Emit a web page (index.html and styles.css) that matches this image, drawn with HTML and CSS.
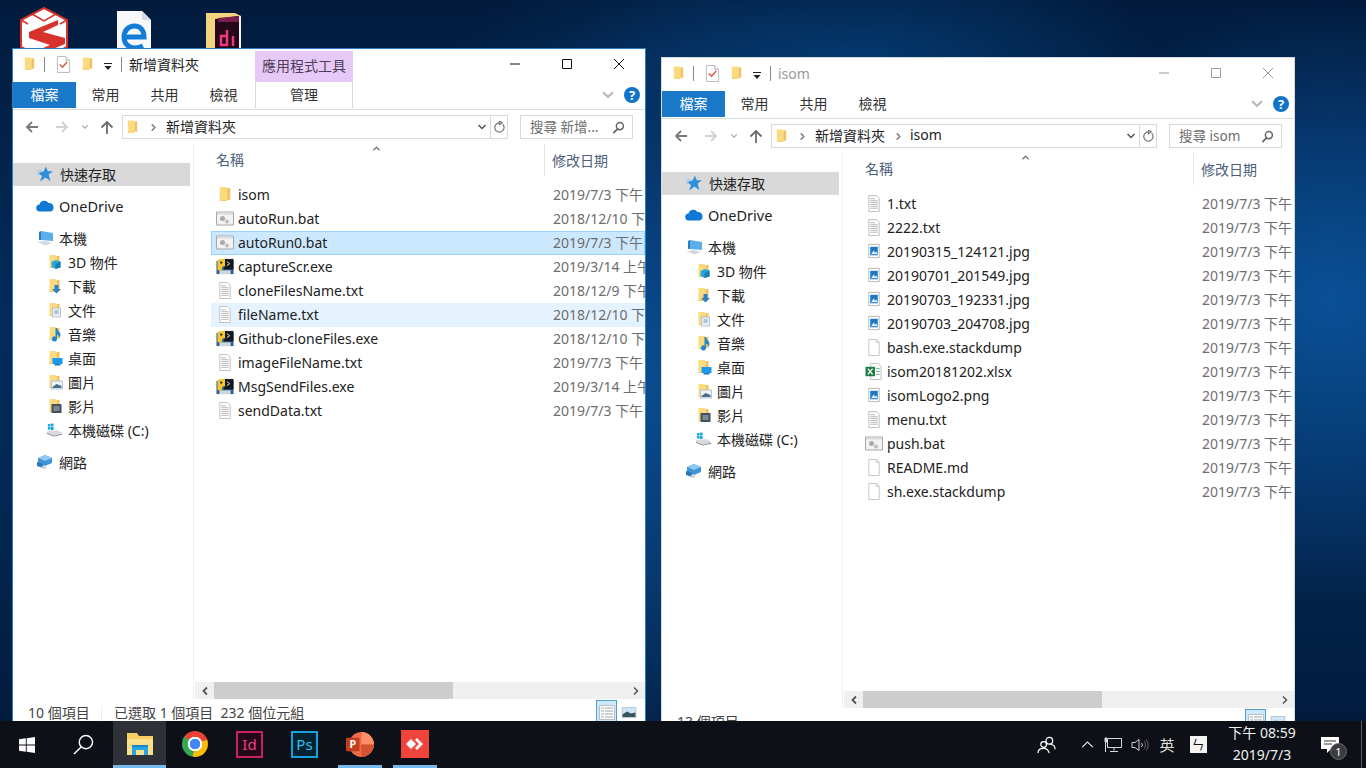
FILE: index.html
```html
<!DOCTYPE html>
<html lang="zh-Hant">
<head>
<meta charset="utf-8">
<title>檔案總管</title>
<link rel="stylesheet" href="styles.css">
</head>
<body>
<svg class="sprite" aria-hidden="true">
  <symbol id="i-folder" viewBox="0 0 16 16"><path d="M3 1h6l1 1v12H3z" fill="#fbdb7e"/><path d="M10 2h3v11h-3z" fill="#eec35f"/><path d="M3 13h7v1H3z" fill="#f3cc68"/></symbol>
  <symbol id="i-check" viewBox="0 0 16 18"><path d="M1.500 .5h9l4 4v13h-13z" fill="#fff" stroke="#b9b9b9"/><path d="M10.500 .5v4h4" fill="#eee" stroke="#b9b9b9"/><path d="M4 9l3 3 5-6" fill="none" stroke="#d9573f" stroke-width="1.500"/></symbol>
  <symbol id="i-txt" viewBox="0 0 16 18"><path d="M2.500 .5h8l3 3v14h-11z" fill="#fff" stroke="#bdbdbd"/><path d="M4 4h5M4 6h8M4 8h8M4 10h8M4 12h8M4 14h8" stroke="#b9b9b9"/></symbol>
  <symbol id="i-blank" viewBox="0 0 16 18"><path d="M2.500 .5h8l3 3v14h-11z" fill="#fff" stroke="#c4c4c4"/><path d="M10.500 .5v3h3" fill="#f1f1f1" stroke="#c4c4c4"/></symbol>
  <symbol id="i-img" viewBox="0 0 16 18"><path d="M2.500 1.500h11v14h-11z" fill="#fff" stroke="#b5b5b5"/><rect x="4" y="4" width="8" height="9" fill="#1e78c8"/><path d="M5 12l2.500-4 2 2 1-1 1.500 3z" fill="#d5ecff"/></symbol>
  <symbol id="i-bat" viewBox="0 0 18 16"><path d="M.5 1.500h17v13H.5z" fill="#f2f2f2" stroke="#a8a8a8"/><path d="M1 2h16v2H1z" fill="#d8dde3"/><circle cx="6.500" cy="8" r="2.500" fill="#aaa"/><circle cx="11" cy="11" r="2" fill="#bdbdbd"/></symbol>
  <symbol id="i-exe" viewBox="0 0 18 18"><path d="M0 3h18v14H0z" fill="#2a5d8c"/><path d="M3 13h12v4H3z" fill="#cfd6dc"/><path d="M8 1h10v11H8z" fill="#15181f"/><path d="M1 3l2-2h6v8H6v4H1z" fill="#f1c832"/><circle cx="5" cy="5" r="1.200" fill="#222"/><path d="M11 4l3 2-3 2" stroke="#ddd" fill="none"/></symbol>
  <symbol id="i-xlsx" viewBox="0 0 18 18"><path d="M5.500 .5h8l3 3v14h-11z" fill="#fff" stroke="#bfbfbf"/><path d="M11 6h4M11 9h4M11 12h4" stroke="#5fa97f"/><rect x="0" y="4" width="10" height="10" fill="#1d7d45"/><path d="M2.500 6l5 6M7.500 6l-5 6" stroke="#fff" stroke-width="1.400"/></symbol>
  <symbol id="i-star" viewBox="0 0 16 16"><path d="M9 .5l1.700 4.800H16l-4.300 3.200 1.600 6.500L8.600 11.500 3 15.500l2-5.500L1 7l5.500-1.500z" fill="#2f8fdb"/><path d="M0 5h5M0 8h3" stroke="#8ec6ee"/></symbol>
  <symbol id="i-cloud" viewBox="0 0 18 12"><path d="M4 11.500a3.500 3.500 0 0 1-.5-7A5 5 0 0 1 12.500 3a4.200 4.200 0 0 1 5 4.500 4 4 0 0 1-3 4z" fill="#0f78d4"/></symbol>
  <symbol id="i-pc" viewBox="0 0 18 16"><path d="M5 1l12 2v8l-12-1z" fill="#5aaeea"/><path d="M5 1l-2 1v8l2 0z" fill="#2f7fbd"/><path d="M1 12l8-1 7 2-7 2.500z" fill="#d5d9dd"/></symbol>
  <symbol id="i-3d" viewBox="0 0 16 16"><use href="#i-folder"/><path d="M9 6l5 1.500v6L9 15l-4-2V8z" fill="#28a7d8"/><path d="M9 10v5l5-1.500V7.500z" fill="#1a7fb0"/></symbol>
  <symbol id="i-dl" viewBox="0 0 16 16"><use href="#i-folder"/><path d="M8 7h4v4h2.500L10 15.500 5.500 11H8z" fill="#2f7fc4"/></symbol>
  <symbol id="i-doc" viewBox="0 0 16 16"><use href="#i-folder"/><path d="M6 6h8v9H6z" fill="#e8eef4" stroke="#a9b7c4" stroke-width=".8"/><path d="M8 9h4M8 11h4" stroke="#6a9cc5"/></symbol>
  <symbol id="i-music" viewBox="0 0 16 16"><use href="#i-folder"/><path d="M9 2h1.500c.5 3 3.500 4 3.500 7 0 1-.5 2-1 3 0-2-1-3-2.500-3.500V13a2.500 2.500 0 1 1-1.500-2.300z" fill="#1d87cf"/></symbol>
  <symbol id="i-desk" viewBox="0 0 16 16"><use href="#i-folder"/><rect x="6" y="8" width="10" height="6" fill="#1a9ae8"/><rect x="8" y="14" width="6" height="1.500" fill="#1a7dc0"/></symbol>
  <symbol id="i-pic" viewBox="0 0 16 16"><use href="#i-folder"/><rect x="5" y="7" width="11" height="8" fill="#eef3f7" stroke="#a9b7c4" stroke-width=".8"/><path d="M6 13l4-3 5 2v2H6z" fill="#47708f"/></symbol>
  <symbol id="i-vid" viewBox="0 0 16 16"><use href="#i-folder"/><rect x="5" y="6" width="10" height="9" fill="#45505c"/><path d="M7 8h6v5H7z" fill="#7a8794"/></symbol>
  <symbol id="i-drive" viewBox="0 0 18 16"><path d="M1 9l11-1 5 3v2l-9 2-7-3z" fill="#d9dcdf"/><path d="M1 12l7 3 9-2v-1l-9 2-7-3z" fill="#8c9298"/><path d="M2 2l2.500-.4v2.600H2zM5 1.500l3-.5v3.200H5zM2 4.800h2.500v2.600H2zM5 4.800h3V8H5z" fill="#17a3e0"/></symbol>
  <symbol id="i-net" viewBox="0 0 18 16"><path d="M9 1l7 3v5l-7 3-7-3V4z" fill="#3f93d6"/><path d="M9 1l7 3-7 3-7-3z" fill="#8ecbf2"/><path d="M1 8l6 2v4l-6-2z" fill="#2a76b5"/><path d="M5 12l6 1 -3 2.500z" fill="#c7ccd1"/></symbol>
  <symbol id="i-back" viewBox="0 0 16 16"><path d="M14 8H3M8 3L3 8l5 5" fill="none" stroke="currentColor" stroke-width="1.800"/></symbol>
  <symbol id="i-up" viewBox="0 0 16 16"><path d="M8 15V3M2.500 8.500L8 3l5.500 5.500" fill="none" stroke="currentColor" stroke-width="1.800"/></symbol>
  <symbol id="i-chev" viewBox="0 0 10 10"><path d="M1.500 3l3.500 3.500L8.500 3" fill="none" stroke="currentColor" stroke-width="1.500"/></symbol>
  <symbol id="i-right" viewBox="0 0 10 10"><path d="M3 1.500L6.500 5 3 8.500" fill="none" stroke="currentColor" stroke-width="1.500"/></symbol>
  <symbol id="i-left" viewBox="0 0 10 10"><path d="M7 1.500L3.500 5 7 8.500" fill="none" stroke="currentColor" stroke-width="1.800"/></symbol>
  <symbol id="i-refresh" viewBox="0 0 14 14"><path d="M10.500 3.500a5 5 0 1 1-3.500-1.500M7 0v4l3-2z" fill="none" stroke="currentColor" stroke-width="1.300"/></symbol>
  <symbol id="i-search" viewBox="0 0 14 14"><circle cx="8.500" cy="5.500" r="3.800" fill="none" stroke="currentColor" stroke-width="1.600"/><path d="M6 8.500L1.500 13" stroke="currentColor" stroke-width="2"/></symbol>
  <symbol id="i-min" viewBox="0 0 12 12"><path d="M1 6h10" stroke="currentColor"/></symbol>
  <symbol id="i-max" viewBox="0 0 12 12"><path d="M1.500 1.500h9v9h-9z" fill="none" stroke="currentColor"/></symbol>
  <symbol id="i-close" viewBox="0 0 12 12"><path d="M1 1l10 10M11 1L1 11" stroke="currentColor"/></symbol>
  <symbol id="i-qdrop" viewBox="0 0 10 10"><path d="M1 2.500h8" stroke="#222"/><path d="M1.500 5h7L5 9z" fill="#222"/></symbol>
  <symbol id="i-details" viewBox="0 0 18 18"><path d="M1.500 2.500h15v14h-15z" fill="#fff" stroke="#b8bec4"/><path d="M3 5h3M7 5h8M3 8h3M7 8h8M3 11h3M7 11h8M3 14h3M7 14h8" stroke="#9aa3ab"/></symbol>
  <symbol id="i-large" viewBox="0 0 16 12"><rect width="16" height="12" fill="#b5c9dc"/><rect x="1" y="1" width="14" height="10" fill="#cfe3f3"/><path d="M1 8l5-3 4 2 5-1v5H1z" fill="#39575a"/></symbol>
</svg>

<main class="desktop">
  <div class="desk-icon desk-sketch">
    <svg viewBox="0 0 48 54" width="48" height="54"><path d="M24 1L47 13v27L24 52 1 40V13z" fill="#fff" stroke="#d8322c" stroke-width="2"/><path d="M12 7l12 7 12-7M1 13l7 4M47 13l-7 4" fill="none" stroke="#d8322c" stroke-width="1.500"/><path d="M38 13L9 25v6l21 7-14 6h12l17-7v-6L23 25l15-7z" fill="#d8322c"/></svg>
  </div>
  <div class="desk-icon desk-edge">
    <svg viewBox="0 0 36 40" width="36" height="40"><path d="M1 1h25l9 9v30H1z" fill="#f6f8fa"/><path d="M26 1v9h9z" fill="#d5dbe2"/><path d="M9 27h19c0-7-4-11-9.500-11S8 20 8 27s5 11 11 11c3 0 6-1 8-2" fill="none" stroke="#127cd6" stroke-width="5"/></svg>
  </div>
  <div class="desk-icon desk-id">
    <svg viewBox="0 0 36 40" width="36" height="40"><path d="M0 1h29l6 3v36H0z" fill="#f5d27e"/><path d="M33 4h2v36h-2z" fill="#f4f4f4"/><path d="M9 7l24-3v36H9z" fill="#25071a"/><path d="M12 6l21-2v6H12z" fill="#7a1e4e"/><path d="M21 18v15h-6V24h6M27 24v10" fill="none" stroke="#f0377f" stroke-width="2.500"/></svg>
  </div>

  <section class="window active left-win">
    <header class="titlebar">
      <div class="qat">
        <svg class="qi"><use href="#i-folder"/></svg>
        <span class="qsep"></span>
        <svg class="qi2"><use href="#i-check"/></svg>
        <svg class="qi"><use href="#i-folder"/></svg>
        <svg class="qdrop"><use href="#i-qdrop"/></svg>
        <span class="qsep"></span>
        <span class="wintitle">新增資料夾</span>
      </div>
      <div class="ctx-title">應用程式工具</div>
      <div class="winbtns">
        <span class="winbtn"><svg><use href="#i-min"/></svg></span>
        <span class="winbtn"><svg><use href="#i-max"/></svg></span>
        <span class="winbtn"><svg><use href="#i-close"/></svg></span>
      </div>
    </header>
    <nav class="tabs">
      <span class="tab tab-file">檔案</span>
      <span class="tab">常用</span>
      <span class="tab">共用</span>
      <span class="tab">檢視</span>
      <span class="tab tab-ctx">管理</span>
      <svg class="ribbon-chev"><use href="#i-chev"/></svg>
      <span class="help">?</span>
    </nav>
    <div class="navrow">
      <span class="nb nb-back"><svg><use href="#i-back"/></svg></span>
      <span class="nb nb-fwd"><svg><use href="#i-back"/></svg></span>
      <span class="nb nb-drop"><svg><use href="#i-chev"/></svg></span>
      <span class="nb nb-up"><svg><use href="#i-up"/></svg></span>
      <div class="address">
        <svg class="addr-folder"><use href="#i-folder"/></svg>
        <svg class="crumb-sep"><use href="#i-right"/></svg>
        <span class="crumb">新增資料夾</span>
        <svg class="addr-drop"><use href="#i-chev"/></svg>
        <span class="addr-refresh"><svg><use href="#i-refresh"/></svg></span>
      </div>
      <div class="searchbox"><span class="search-text">搜尋 新增...</span><svg><use href="#i-search"/></svg></div>
    </div>
    <div class="body">
      <aside class="pane">
        <div class="pi pi-sel"><svg class="pic-star"><use href="#i-star"/></svg>快速存取</div>
        <div class="pi pi-top pi-od"><svg><use href="#i-cloud"/></svg>OneDrive</div>
        <div class="pi pi-top"><svg><use href="#i-pc"/></svg>本機</div>
        <div class="pi pi-child"><svg><use href="#i-3d"/></svg>3D 物件</div>
        <div class="pi pi-child"><svg><use href="#i-dl"/></svg>下載</div>
        <div class="pi pi-child"><svg><use href="#i-doc"/></svg>文件</div>
        <div class="pi pi-child"><svg><use href="#i-music"/></svg>音樂</div>
        <div class="pi pi-child"><svg><use href="#i-desk"/></svg>桌面</div>
        <div class="pi pi-child"><svg><use href="#i-pic"/></svg>圖片</div>
        <div class="pi pi-child"><svg><use href="#i-vid"/></svg>影片</div>
        <div class="pi pi-child"><svg><use href="#i-drive"/></svg>本機磁碟 (C:)</div>
        <div class="pi pi-top"><svg><use href="#i-net"/></svg>網路</div>
      </aside>
      <div class="files">
        <div class="colhead">
          <span class="col-name">名稱<svg class="sort"><use href="#i-chev"/></svg></span>
          <span class="col-date">修改日期</span>
        </div>
        <div class="rows">
          <div class="row"><span class="fn"><svg><use href="#i-folder"/></svg>isom</span><span class="fd">2019/7/3 下午 08:59</span></div>
          <div class="row"><span class="fn"><svg><use href="#i-bat"/></svg>autoRun.bat</span><span class="fd">2018/12/10 下午 03:21</span></div>
          <div class="row row-sel"><span class="fn"><svg><use href="#i-bat"/></svg>autoRun0.bat</span><span class="fd">2019/7/3 下午 08:41</span></div>
          <div class="row"><span class="fn"><svg><use href="#i-exe"/></svg>captureScr.exe</span><span class="fd">2019/3/14 上午 10:12</span></div>
          <div class="row"><span class="fn"><svg><use href="#i-txt"/></svg>cloneFilesName.txt</span><span class="fd">2018/12/9 下午 04:33</span></div>
          <div class="row row-hover"><span class="fn"><svg><use href="#i-txt"/></svg>fileName.txt</span><span class="fd">2018/12/10 下午 03:21</span></div>
          <div class="row"><span class="fn"><svg><use href="#i-exe"/></svg>Github-cloneFiles.exe</span><span class="fd">2018/12/10 下午 03:21</span></div>
          <div class="row"><span class="fn"><svg><use href="#i-txt"/></svg>imageFileName.txt</span><span class="fd">2019/7/3 下午 08:47</span></div>
          <div class="row"><span class="fn"><svg><use href="#i-exe"/></svg>MsgSendFiles.exe</span><span class="fd">2019/3/14 上午 10:12</span></div>
          <div class="row"><span class="fn"><svg><use href="#i-txt"/></svg>sendData.txt</span><span class="fd">2019/7/3 下午 08:47</span></div>
        </div>
        <div class="hscroll">
          <span class="sb-arrow"><svg><use href="#i-left"/></svg></span>
          <span class="sb-thumb"></span>
          <span class="sb-arrow sb-right"><svg><use href="#i-right"/></svg></span>
        </div>
      </div>
    </div>
    <footer class="status">
      <span class="st-count">10 個項目</span>
      <span class="st-sep"></span>
      <span class="st-sel">已選取 1 個項目&nbsp;&nbsp;232 個位元組</span>
      <span class="viewbtn viewbtn-on"><svg><use href="#i-details"/></svg></span>
      <svg class="view-large"><use href="#i-large"/></svg>
    </footer>
  </section>

  <section class="window inactive right-win">
    <header class="titlebar">
      <div class="qat">
        <svg class="qi"><use href="#i-folder"/></svg>
        <span class="qsep"></span>
        <svg class="qi2"><use href="#i-check"/></svg>
        <svg class="qi"><use href="#i-folder"/></svg>
        <svg class="qdrop"><use href="#i-qdrop"/></svg>
        <span class="qsep"></span>
        <span class="wintitle">isom</span>
      </div>
      <div class="winbtns">
        <span class="winbtn"><svg><use href="#i-min"/></svg></span>
        <span class="winbtn"><svg><use href="#i-max"/></svg></span>
        <span class="winbtn"><svg><use href="#i-close"/></svg></span>
      </div>
    </header>
    <nav class="tabs">
      <span class="tab tab-file">檔案</span>
      <span class="tab">常用</span>
      <span class="tab">共用</span>
      <span class="tab">檢視</span>
      <svg class="ribbon-chev"><use href="#i-chev"/></svg>
      <span class="help">?</span>
    </nav>
    <div class="navrow">
      <span class="nb nb-back"><svg><use href="#i-back"/></svg></span>
      <span class="nb nb-fwd"><svg><use href="#i-back"/></svg></span>
      <span class="nb nb-drop"><svg><use href="#i-chev"/></svg></span>
      <span class="nb nb-up"><svg><use href="#i-up"/></svg></span>
      <div class="address">
        <svg class="addr-folder"><use href="#i-folder"/></svg>
        <svg class="crumb-sep"><use href="#i-right"/></svg>
        <span class="crumb">新增資料夾</span>
        <svg class="crumb-sep crumb-sep2"><use href="#i-right"/></svg>
        <span class="crumb">isom</span>
        <svg class="addr-drop"><use href="#i-chev"/></svg>
        <span class="addr-refresh"><svg><use href="#i-refresh"/></svg></span>
      </div>
      <div class="searchbox"><span class="search-text">搜尋 isom</span><svg><use href="#i-search"/></svg></div>
    </div>
    <div class="body">
      <aside class="pane">
        <div class="pi pi-sel"><svg class="pic-star"><use href="#i-star"/></svg>快速存取</div>
        <div class="pi pi-top pi-od"><svg><use href="#i-cloud"/></svg>OneDrive</div>
        <div class="pi pi-top"><svg><use href="#i-pc"/></svg>本機</div>
        <div class="pi pi-child"><svg><use href="#i-3d"/></svg>3D 物件</div>
        <div class="pi pi-child"><svg><use href="#i-dl"/></svg>下載</div>
        <div class="pi pi-child"><svg><use href="#i-doc"/></svg>文件</div>
        <div class="pi pi-child"><svg><use href="#i-music"/></svg>音樂</div>
        <div class="pi pi-child"><svg><use href="#i-desk"/></svg>桌面</div>
        <div class="pi pi-child"><svg><use href="#i-pic"/></svg>圖片</div>
        <div class="pi pi-child"><svg><use href="#i-vid"/></svg>影片</div>
        <div class="pi pi-child"><svg><use href="#i-drive"/></svg>本機磁碟 (C:)</div>
        <div class="pi pi-top"><svg><use href="#i-net"/></svg>網路</div>
      </aside>
      <div class="files">
        <div class="colhead">
          <span class="col-name">名稱<svg class="sort"><use href="#i-chev"/></svg></span>
          <span class="col-date">修改日期</span>
        </div>
        <div class="rows">
          <div class="row"><span class="fn"><svg><use href="#i-txt"/></svg>1.txt</span><span class="fd">2019/7/3 下午 08:30</span></div>
          <div class="row"><span class="fn"><svg><use href="#i-txt"/></svg>2222.txt</span><span class="fd">2019/7/3 下午 08:30</span></div>
          <div class="row"><span class="fn"><svg><use href="#i-img"/></svg>20190315_124121.jpg</span><span class="fd">2019/7/3 下午 08:30</span></div>
          <div class="row"><span class="fn"><svg><use href="#i-img"/></svg>20190701_201549.jpg</span><span class="fd">2019/7/3 下午 08:30</span></div>
          <div class="row"><span class="fn"><svg><use href="#i-img"/></svg>20190703_192331.jpg</span><span class="fd">2019/7/3 下午 08:30</span></div>
          <div class="row"><span class="fn"><svg><use href="#i-img"/></svg>20190703_204708.jpg</span><span class="fd">2019/7/3 下午 08:47</span></div>
          <div class="row"><span class="fn"><svg><use href="#i-blank"/></svg>bash.exe.stackdump</span><span class="fd">2019/7/3 下午 08:30</span></div>
          <div class="row"><span class="fn"><svg><use href="#i-xlsx"/></svg>isom20181202.xlsx</span><span class="fd">2019/7/3 下午 08:30</span></div>
          <div class="row"><span class="fn"><svg><use href="#i-img"/></svg>isomLogo2.png</span><span class="fd">2019/7/3 下午 08:30</span></div>
          <div class="row"><span class="fn"><svg><use href="#i-txt"/></svg>menu.txt</span><span class="fd">2019/7/3 下午 08:30</span></div>
          <div class="row"><span class="fn"><svg><use href="#i-bat"/></svg>push.bat</span><span class="fd">2019/7/3 下午 08:30</span></div>
          <div class="row"><span class="fn"><svg><use href="#i-blank"/></svg>README.md</span><span class="fd">2019/7/3 下午 08:30</span></div>
          <div class="row"><span class="fn"><svg><use href="#i-blank"/></svg>sh.exe.stackdump</span><span class="fd">2019/7/3 下午 08:30</span></div>
        </div>
        <div class="hscroll">
          <span class="sb-arrow"><svg><use href="#i-left"/></svg></span>
          <span class="sb-thumb"></span>
          <span class="sb-arrow sb-right"><svg><use href="#i-right"/></svg></span>
        </div>
      </div>
    </div>
    <footer class="status">
      <span class="st-count">13 個項目</span>
      <span class="viewbtn viewbtn-on"><svg><use href="#i-details"/></svg></span>
      <svg class="view-large"><use href="#i-large"/></svg>
    </footer>
  </section>
</main>

<footer class="taskbar">
  <span class="tb-start"><svg viewBox="0 0 16 16"><path d="M0 2.300L6.800 1.300V7.500H0zM7.700 1.200L16 0V7.500H7.700zM0 8.400H6.800V14.700L0 13.700zM7.700 8.400H16V16L7.700 14.800z" fill="#fff"/></svg></span>
  <span class="tb-search"><svg viewBox="0 0 22 22"><circle cx="13.500" cy="8.500" r="7" fill="none" stroke="#fff" stroke-width="1.500"/><path d="M8.500 13.500L1 21" stroke="#fff" stroke-width="1.500"/></svg></span>
  <span class="tb-app tb-active"><svg viewBox="0 0 26 24" class="tb-ex"><path d="M0 1h10l2 3h14v19H0z" fill="#f8cd64"/><path d="M0 7h26v16H0z" fill="#fde08c"/><path d="M5 13h16v10h-4v-5H9v5H5z" fill="#29a3e3"/><path d="M5 13h16v2H5z" fill="#1f86c4"/></svg></span>
  <span class="tb-app"><span class="chrome"></span></span>
  <span class="tb-app"><span class="adobe adobe-id">Id</span></span>
  <span class="tb-app"><span class="adobe adobe-ps">Ps</span></span>
  <span class="tb-app tb-run"><svg viewBox="0 0 30 28" class="tb-ppt"><circle cx="17" cy="14" r="13" fill="#ed6c47"/><path d="M17 1a13 13 0 0 1 13 13H17z" fill="#ff8f6b"/><path d="M17 14h13a13 13 0 0 1-13 13z" fill="#d35230"/><rect x="1" y="7" width="14" height="14" rx="1" fill="#c43e1c"/><text x="8" y="18" class="ppt-letter">P</text></svg></span>
  <span class="tb-app tb-run"><svg viewBox="0 0 28 28" class="tb-any"><rect width="28" height="28" fill="#ef443b"/><path d="M10 9l5 5-5 5-5-5z" fill="#fff"/><path d="M16 8l6 6-6 6-2-2 4-4-4-4z" fill="#fff"/></svg></span>
  <span class="tray-gap"></span>
  <span class="tray tr-people"><svg viewBox="0 0 20 20"><circle cx="13" cy="6" r="3.500" fill="none" stroke="#fff" stroke-width="1.300"/><circle cx="7" cy="10" r="3" fill="#0e1117" stroke="#fff" stroke-width="1.300"/><path d="M1 19c0-3 2.500-5 6-5s5 2 6 5M14 10c3 0 5 2 5 5" fill="none" stroke="#fff" stroke-width="1.300"/></svg></span>
  <span class="tray tr-up"><svg viewBox="0 0 14 8"><path d="M1 7l6-6 6 6" fill="none" stroke="#fff" stroke-width="1.200"/></svg></span>
  <span class="tray tr-net"><svg viewBox="0 0 18 16"><path d="M3.500 1.500h14v9h-14zM10 10.500v3M6 14.500h8" fill="none" stroke="#d8d8d8"/><path d="M1 1h2v4H1zM1.500 5v10" stroke="#d8d8d8" fill="#d8d8d8"/></svg></span>
  <span class="tray tr-vol"><svg viewBox="0 0 18 14"><path d="M1 4.500h3l4-3v11l-4-3H1z" fill="none" stroke="#d0d0d0"/><path d="M10.500 5a3 3 0 0 1 0 4" fill="none" stroke="#d0d0d0"/><path d="M13 3a6 6 0 0 1 0 8M15 1.500a8 8 0 0 1 0 11" fill="none" stroke="#666"/></svg></span>
  <span class="tray tr-lang">英</span>
  <span class="tray tr-ime"><span class="ime-box">ㄣ</span></span>
  <span class="tray clock"><span>下午 08:59</span><span>2019/7/3</span></span>
  <span class="tray tr-note"><svg viewBox="0 0 18 16"><path d="M0 0h18v12H10l-4 4v-4H0z" fill="#fff"/><path d="M3 4h12M3 7h8" stroke="#333"/></svg><span class="badge">1</span></span>
  <span class="tb-show"></span>
</footer>
</body>
</html>
```
FILE: styles.css
```css
* { box-sizing: border-box; }
html, body { margin: 0; padding: 0; }
body {
  width: 1366px;
  height: 768px;
  overflow: hidden;
  display: flex;
  flex-direction: column;
  font-family: "Noto Sans", "Noto Sans CJK TC", sans-serif;
  font-size: 14px;
  color: #222;
}
svg { display: block; flex: none; }
.sprite { width: 0; height: 0; position: absolute; }

.desktop {
  position: relative;
  flex: 1;
  overflow: hidden;
  background:
    radial-gradient(ellipse 330px 300px at 1330px 300px, #0a5097 0%, rgba(10,80,151,0) 100%),
    radial-gradient(ellipse 330px 420px at 650px 380px, #0a4c8f 0%, rgba(10,76,143,0) 100%),
    radial-gradient(ellipse 300px 110px at 860px 60px, #04396f 0%, rgba(4,57,111,0) 100%),
    linear-gradient(#021b3d 0%, #032c5c 45%, #03264f 75%, #021b3d 100%);
}
.desk-icon { position: absolute; }
.desk-sketch { left: 20px; top: 7px; }
.desk-edge { left: 116px; top: 10px; }
.desk-id { left: 206px; top: 12px; }

/* window */
.window {
  position: absolute;
  width: 634px;
  height: 677px;
  background: #fff;
  display: flex;
  flex-direction: column;
  overflow: hidden;
  border: 1px solid #2a7cc4;
}
.left-win { left: 12px; top: 48px; }
.right-win { left: 661px; top: 57px; border-color: #d5dae0; }

.titlebar { height: 33px; flex: none; display: flex; align-items: flex-end; }
.qat { width: 242px; height: 33px; flex: none; display: flex; align-items: center; padding: 0 0 3px 9px; }
.qi { width: 15px; height: 16px; }
.qi2 { width: 15px; height: 17px; margin: 0 9px 0 11px; }
.qsep { width: 1px; height: 15px; background: #8a8a8a; margin-left: 7px; }
.qdrop { width: 10px; height: 10px; margin-left: 8px; margin-top: 3px; }
.qdrop + .qsep { margin-left: 8px; }
.wintitle { margin-left: 7px; white-space: nowrap; color: #222; font-size: 14px; }
.inactive .wintitle { color: #9a9a9a; }
.ctx-title {
  width: 98px; height: 31px; flex: none;
  background: #e7c9f7;
  text-align: center;
  line-height: 29px;
  color: #4d4056;
}
.winbtns { margin-left: auto; align-self: stretch; display: flex; }
.winbtn { width: 52px; height: 29px; display: flex; align-items: center; justify-content: center; color: #111; }
.winbtn svg { width: 12px; height: 12px; }
.inactive .winbtn { color: #9a9a9a; }

.tabs { height: 28px; flex: none; display: flex; border-bottom: 1px solid #dadbdc; padding-bottom: 1px; align-items: stretch; }
.tab { width: 59px; text-align: center; line-height: 26px; color: #333; font-size: 14px; }
.tab-file { width: 63px; background: #1a78c9; color: #fff; }
.tab-ctx { width: 98px; margin-left: 2px; border-left: 1px solid #dadbdc; border-right: 1px solid #dadbdc; }
.ribbon-chev { width: 14px; height: 14px; color: #b8b8b8; margin: 6px 0 0 auto; }
.help {
  width: 16px; height: 16px; border-radius: 50%;
  background: #1274c9; color: #fff; font-weight: 700; font-size: 13px;
  line-height: 16px; text-align: center;
  margin: 5px 5px 0 9px;
}

.navrow { height: 34px; flex: none; display: flex; align-items: center; }
.nb { display: flex; justify-content: center; align-items: center; height: 24px; color: #7a7a7a; }
.nb-back { width: 38px; }
.nb-fwd { width: 22px; color: #d2d2d2; }
.nb-fwd svg { transform: scaleX(-1); }
.nb-drop { width: 24px; color: #a8a8a8; }
.nb-up { width: 20px; color: #6d6d6d; }
.nb svg { width: 16px; height: 16px; }
.nb-drop svg { width: 8px; height: 8px; }
.address {
  width: 386px; height: 24px; margin-left: 5px; flex: none;
  border: 1px solid #d9d9d9;
  display: flex; align-items: center;
}
.addr-folder { width: 15px; height: 16px; margin-left: 2px; }
.crumb-sep { width: 9px; height: 9px; color: #777; margin-left: 9px; }
.crumb-sep2 { margin-left: 9px; margin-right: -1px; }
.crumb { margin-left: 8px; padding-bottom: 3px; white-space: nowrap; }
.addr-drop { width: 10px; height: 10px; color: #555; margin-left: auto; margin-right: 3px; }
.addr-refresh { width: 17px; height: 22px; border-left: 1px solid #d9d9d9; display: flex; align-items: center; justify-content: center; color: #777; }
.addr-refresh svg { width: 13px; height: 13px; }
.searchbox {
  width: 113px; height: 24px; margin-left: 12px; flex: none;
  border: 1px solid #d9d9d9;
  display: flex; align-items: center; justify-content: space-between;
  padding: 0 7px 0 9px; color: #6d6d6d; font-size: 13.500px;
}
.searchbox svg { width: 13px; height: 13px; color: #666; }
.search-text { white-space: nowrap; padding-bottom: 2px; }

.body { flex: none; height: 555px; display: flex; }
.pane { width: 181px; flex: none; padding-top: 19px; border-right: 1px solid #f0f0f0; }
.pi { height: 24px; display: flex; align-items: center; white-space: nowrap; color: #222; font-size: 14px; }
.pi svg { width: 18px; height: 16px; margin-right: 5px; }
.pi-sel { width: 177px; height: 23px; margin-bottom: 1px; background: #d9d9d9; padding: 0 0 1px 24px; }
.pi-sel .pic-star { width: 16px; height: 16px; margin-right: 7px; }
.pi-top { margin-top: 8px; padding-left: 23px; }
.pi-od { font-size: 14.500px; }
.pi-child { padding-left: 33px; }
.pi-child svg { width: 17px; }

.files { flex: 1; min-width: 0; display: flex; flex-direction: column; }
.colhead { height: 32px; flex: none; display: flex; align-items: center; color: #4c607a; font-size: 14px; }
.col-name { position: relative; width: 351px; height: 32px; padding-left: 22px; line-height: 32px; border-right: 1px solid #e5e5e5; flex: none; }
.sort { position: absolute; left: 177px; top: 0; width: 11px; height: 9px; color: #7a7a7a; transform: scaleY(-1); }
.col-date { padding-left: 7px; white-space: nowrap; }
.rows { flex: 1; padding: 7px 0 0 17px; min-height: 0; overflow: hidden; }
.row { height: 24px; display: flex; align-items: center; white-space: nowrap; }
.row-sel { background: #cce8ff; box-shadow: inset 0 0 0 1px #99d1ff; }
.row-hover { background: #e5f3ff; }
.fn { width: 342px; flex: none; display: flex; align-items: center; padding: 0 0 2px 5px; color: #222; }
.fn svg { width: 18px; height: 17px; margin-right: 4px; }
.fd { color: #6d6d6d; padding-bottom: 2px; }

.hscroll { height: 17px; flex: none; margin-left: 1px; background: #f0f0f0; display: flex; align-items: center; }
.sb-arrow { width: 19px; height: 17px; display: flex; align-items: center; justify-content: center; color: #555; }
.sb-arrow svg { width: 10px; height: 10px; }
.sb-thumb { width: 239px; height: 17px; background: #cdcdcd; }
.sb-right { margin-left: auto; }

.status { height: 26px; flex: none; display: flex; align-items: flex-start; padding-left: 15px; color: #444; font-size: 14px; }
.st-count { line-height: 20px; margin-top: 4px; white-space: nowrap; width: 73px; flex: none; }
.st-sep { width: 1px; height: 16px; margin-top: 7px; background: #ececec; }
.st-sel { line-height: 20px; margin-top: 4px; margin-left: 12px; white-space: nowrap; }
.viewbtn { margin-left: auto; margin-top: 1px; width: 21px; height: 24px; display: flex; justify-content: center; padding-top: 2px; }
.viewbtn svg { width: 18px; height: 18px; }
.viewbtn-on { background: #cce8ff; border: 1px solid #52a0c8; }
.view-large { width: 16px; height: 11px; margin: 8px 8px 0 4px; }

/* taskbar */
.taskbar { height: 47px; flex: none; background: #0d1016; display: flex; align-items: stretch; color: #fff; }
.tb-start { width: 54px; display: flex; align-items: center; justify-content: center; }
.tb-start svg { width: 16px; height: 16px; }
.tb-search { width: 59px; display: flex; align-items: center; justify-content: center; }
.tb-search svg { width: 21px; height: 21px; }
.tb-app { width: 55px; display: flex; align-items: center; justify-content: center; padding-bottom: 1px; }
.tb-active { width: 53px; margin-right: 1px; background: linear-gradient(#76b9ed, #76b9ed) bottom / 100% 3px no-repeat #2e3238; }
.tb-run { background: linear-gradient(#76b9ed, #76b9ed) bottom / 44px 3px no-repeat; }
.tb-ex { width: 26px; height: 24px; }
.chrome {
  width: 26px; height: 26px; border-radius: 50%;
  background:
    radial-gradient(circle, #4285f4 0 5px, #fff 5.500px 7px, transparent 7.500px),
    conic-gradient(#ea4335 0 70deg, #fbbc05 70deg 190deg, #34a853 190deg 305deg, #ea4335 305deg);
}
.adobe { width: 27px; height: 27px; display: block; text-align: center; line-height: 23px; font-size: 15px; font-family: "Noto Sans", sans-serif; }
.adobe-id { background: #230915; border: 2px solid #c9205f; color: #ee3d8c; }
.adobe-ps { background: #04222f; border: 2px solid #17a0dc; color: #36c0f5; }
.tb-ppt { width: 29px; height: 27px; }
.ppt-letter { font-size: 11px; font-weight: 700; fill: #fff; text-anchor: middle; font-family: "Noto Sans", sans-serif; }
.tb-any { width: 28px; height: 28px; }

.tray-gap { flex: 1; }
.tray { display: flex; align-items: center; justify-content: center; }
.tr-people { width: 36px; margin-right: 11px; }
.tr-people svg { width: 19px; height: 19px; }
.tr-up { width: 24px; }
.tr-up svg { width: 13px; height: 7px; }
.tr-net { width: 28px; }
.tr-net svg { width: 18px; height: 16px; }
.tr-vol { width: 26px; }
.tr-vol svg { width: 18px; height: 14px; }
.tr-lang { width: 28px; font-size: 15px; color: #e0e0e0; }
.tr-ime { width: 34px; }
.ime-box { width: 17px; height: 17px; background: #f4f4f4; color: #111; font-size: 13px; line-height: 16px; text-align: center; }
.clock { width: 96px; flex-direction: column; font-size: 14px; line-height: 22px; color: #f0f0f0; padding: 0 2px 1px 0; }
.tr-note { position: relative; width: 38px; margin-right: 12px; }
.tr-note svg { width: 18px; height: 16px; }
.badge {
  position: absolute; left: 19px; top: 22px;
  width: 17px; height: 17px; border-radius: 50%;
  background: #3a3c40; border: 1px solid #666;
  color: #fff; font-size: 11px; line-height: 15px; text-align: center;
}
.tb-show { width: 5px; border-left: 1px solid #5a5c60; }
```
